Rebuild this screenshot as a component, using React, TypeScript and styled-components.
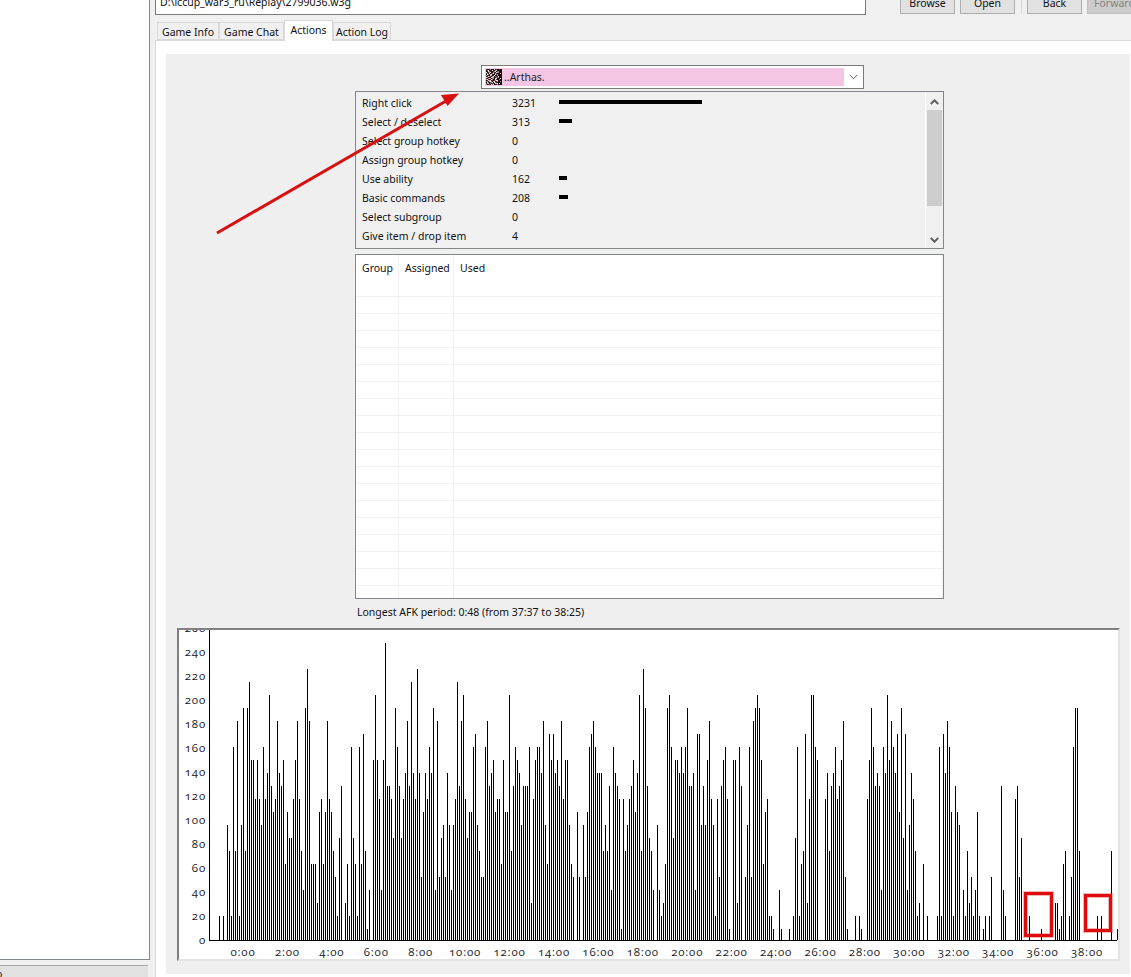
import React from "react";
import styled, { createGlobalStyle } from "styled-components";

const Global = createGlobalStyle`
  html, body { margin: 0; padding: 0; background: #f0f0f0; }
  body { font-family: "Noto Sans", "Open Sans", sans-serif; font-size: 10.5px; color: #111; }
`;

const Root = styled.div`
  position: relative;
  width: 1131px;
  height: 977px;
  overflow: hidden;
  display: flex;
  background: #f0f0f0;
`;
const Sidebar = styled.aside`
  width: 150px;
  margin-right: 5px;
  flex: none;
  display: flex;
  flex-direction: column;
`;
const SideList = styled.div`
  height: 959px;
  background: #fff;
  border-right: 1px solid #828790;
  border-bottom: 1px solid #828790;
`;
const SideStatus = styled.div`
  margin-top: 5px;
  flex: 1;
  width: 148px;
  background: #e1e1e1;
  border-top: 1px solid #a9a9a9;
  overflow: hidden;
  line-height: 17px;
  text-indent: -4px;
`;
const Main = styled.main`
  flex: 1;
  min-width: 0;
  display: flex;
  flex-direction: column;
`;
const Toolbar = styled.div`
  height: 15px;
  display: flex;
  align-items: flex-end;
  overflow: hidden;
  flex: none;
`;
const PathField = styled.div`
  width: 711px;
  height: 24px;
  flex: none;
  box-sizing: border-box;
  border: 1px solid #7a7a7a;
  background: #fff;
  padding-left: 4px;
  line-height: 20px;
  margin-right: 34px;
`;
const ToolButton = styled.button<{ $disabled?: boolean }>`
  width: 55px;
  height: 23px;
  margin: 0 5px 1px 0;
  flex: none;
  box-sizing: border-box;
  padding: 0;
  font: inherit;
  color: ${(p) => (p.$disabled ? "#838383" : "#111")};
  background: ${(p) => (p.$disabled ? "#cccccc" : "#e1e1e1")};
  border: 1px solid ${(p) => (p.$disabled ? "#bfbfbf" : "#adadad")};
`;
const ToolSep = styled.div`
  width: 1px;
  height: 20px;
  background: #d8d8d8;
  margin: 0 5px 1px 1px;
  flex: none;
`;
const Tabs = styled.div`
  margin-top: 5px;
  height: 21px;
  padding-left: 2px;
  display: flex;
  align-items: flex-end;
  margin-bottom: -1px;
  position: relative;
  z-index: 1;
  flex: none;
`;
const Tab = styled.div<{ $active?: boolean; $w: number }>`
  width: ${(p) => p.$w}px;
  height: ${(p) => (p.$active ? 21 : 18)}px;
  margin-bottom: ${(p) => (p.$active ? 0 : 1)}px;
  box-sizing: border-box;
  border: 1px solid #d9d9d9;
  ${(p) => (p.$active ? "border-bottom: none;" : "")}
  background: ${(p) => (p.$active ? "#fff" : "#f0f0f0")};
  text-align: center;
  line-height: 18px;
  white-space: nowrap;
`;
const Pane = styled.section`
  flex: 1;
  background: #fff;
  border-top: 1px solid #d9d9d9;
  border-left: 1px solid #d9d9d9;
  padding: 13px 1px 3px 10px;
  min-height: 0;
  display: flex;
`;
const Panel = styled.div`
  flex: 1;
  background: #efefef;
  display: flex;
  flex-direction: column;
  align-items: flex-start;
  min-width: 0;
`;
const Combo = styled.div`
  margin: 11px 0 0 315px;
  width: 383px;
  height: 24px;
  box-sizing: border-box;
  border: 1px solid #7a7a7a;
  background: #fff;
  padding: 2px 0 2px 3px;
  display: flex;
  align-items: stretch;
  flex: none;
`;
const ComboValue = styled.div`
  width: 359px;
  background: #f5c6e3;
  display: flex;
  align-items: center;
  gap: 2px;
  padding-left: 1px;
  box-sizing: border-box;
  color: #222;
`;
const ComboArrow = styled.div`
  flex: 1;
  display: flex;
  align-items: center;
  justify-content: center;
`;
const Stats = styled.div`
  margin: 2px 0 0 189px;
  width: 589px;
  height: 158px;
  box-sizing: border-box;
  border: 1px solid #82868c;
  background: #f0f0f0;
  display: flex;
  flex: none;
`;
const StatRows = styled.div`
  flex: 1;
  padding-top: 1px;
`;
const StatRow = styled.div`
  height: 19px;
  display: flex;
  align-items: center;
  padding-left: 6px;
`;
const StatLabel = styled.span`
  width: 150px;
  flex: none;
  white-space: nowrap;
`;
const StatValue = styled.span`
  width: 47px;
  flex: none;
`;
const StatBar = styled.i<{ $w: number }>`
  display: block;
  width: ${(p) => p.$w}px;
  height: 4px;
  margin-top: -1px;
  background: #000;
`;
const Scroll = styled.div`
  width: 17px;
  flex: none;
  border-left: 1px solid #fff;
  display: flex;
  flex-direction: column;
  align-items: center;
  padding: 1px 0 0;
`;
const ScrollEnd = styled.div`
  height: 17px;
  width: 100%;
  display: flex;
  align-items: center;
  justify-content: center;
  flex: none;
`;
const Thumb = styled.div`
  width: 15px;
  height: 96px;
  flex: none;
  background: #cdcdcd;
`;
const ScrollTrack = styled.div`
  flex: 1;
`;
const GroupTable = styled.div`
  margin: 5px 0 0 189px;
  width: 589px;
  height: 345px;
  box-sizing: border-box;
  border: 1px solid #82868c;
  background: #fff;
  overflow: hidden;
  flex: none;
`;
const GroupRow = styled.div<{ $head?: boolean }>`
  display: grid;
  grid-template-columns: 43px 55px 1fr;
  height: ${(p) => (p.$head ? 42 : 17)}px;
  box-sizing: border-box;
  border-bottom: 1px solid #f0f0f0;
`;
const GroupCell = styled.div`
  border-right: 1px solid #f0f0f0;
  padding: 6px 0 0 6px;
  line-height: 15px;
  white-space: nowrap;
`;
const Afk = styled.div`
  margin: 5px 0 0 191px;
  height: 16px;
  line-height: 16px;
  flex: none;
  white-space: nowrap;
`;
const ChartFrame = styled.div`
  margin: 8px 0 0 11px;
  width: 943px;
  height: 333px;
  box-sizing: border-box;
  background: #fff;
  border-style: solid;
  border-width: 2px;
  border-color: #808080 #e3e3e3 #e3e3e3 #808080;
  flex: none;
  overflow: hidden;
`;
const ChartSvg = styled.svg`
  display: block;
  text {
    font-family: "Open Sans", "Lato", "DejaVu Serif", serif;
    font-size: 11.5px;
    font-variant-numeric: oldstyle-nums;
    letter-spacing: 0.8px;
    fill: #1a1a2a;
  }
`;
const Overlay = styled.svg`
  position: absolute;
  left: 0;
  top: 0;
  pointer-events: none;
`;

// One character per 2px column, base 36: bar height is 13n - 2 pixels.
const LEVELS = [
  // x = 219 .. 489
  "20209 72f7h 29i7i keebe b9fbd jcabh dce6a 88beh b74il h6663 ab6ah ba752 8c036 2f862 f6g71 40ejeb 4encc b8ifc 8bdhc kdbld 5adbf di4h5 89 5d949 bkchj b8aaf g9755 fhc",
  // x = 491 .. 853
  "deabb 6eaaj 7cfed 9cccf 3beff dh96g egdec hbee9 650a5 0 95afg hfddd 797c4 fdcb1 b79bc eadj7 lic87" +
    "40942 36ijf 8eedf dficc d4gg9 c9ehb 92b5c efb10 ee3fc 059f5 hijie 6ab22 10041 00010 28f26 7g3bj jfe00 0bd7c dfbce h5100 0",
  // x = 855 .. 1117
  "20210 0beif cdc4f djehf dgai8 g49db 72306 02000 02f2g dhfa2 ca904 27352 4a201 20250 000c4 20000 bc580 00200 00010 00000 33126 7025f ii700 00000 02020 00070 01",
]
  .join("")
  .replace(/ /g, "");

const BAR_X0 = 219;
const barsPath = LEVELS.split("")
  .map((c, i) => {
    const n = parseInt(c, 36);
    if (!n) return "";
    const x = BAR_X0 + i * 2;
    const h = 13 * n - 2;
    return `M${x} ${940 - h}h1v${h}h-1z`;
  })
  .join("");

const STATS = [
  { label: "Right click", value: 3231, w: 143 },
  { label: "Select / deselect", value: 313, w: 13 },
  { label: "Select group hotkey", value: 0, w: 0 },
  { label: "Assign group hotkey", value: 0, w: 0 },
  { label: "Use ability", value: 162, w: 8 },
  { label: "Basic commands", value: 208, w: 9 },
  { label: "Select subgroup", value: 0, w: 0 },
  { label: "Give item / drop item", value: 4, w: 0 },
];

const ICON_ROWS = [
  "1001200030100100",
  "0230013002300000",
  "0032100123012000",
  "3012300210322000",
  "1203012302100030",
  "0320230003120000",
  "2100320130020000",
  "0132102302103000",
  "3200033200212000",
  "1023201203300030",
  "2310132003100200",
  "0132301012330000",
  "1203320230120020",
  "0310123032100000",
  "1230201103230300",
  "2011032300120000",
];
const ICON_COLORS = ["#171011", "#5a3a40", "#b08a93", "#ecdde0"];

const PlayerIcon = () => (
  <svg width="16" height="16" viewBox="0 0 16 16" shapeRendering="crispEdges" style={{ flex: "none" }}>
    {ICON_ROWS.map((row, y) =>
      row.split("").map((c, x) => <rect key={`${x}-${y}`} x={x} y={y} width="1" height="1" fill={ICON_COLORS[+c]} />)
    )}
  </svg>
);

const Chevron = ({ up, color = "#606060", w = 2 }: { up?: boolean; color?: string; w?: number }) => (
  <svg width="9" height="6" viewBox="0 0 9 6">
    <path d={up ? "M0.8 5L4.5 1.3L8.2 5" : "M0.8 1L4.5 4.7L8.2 1"} fill="none" stroke={color} strokeWidth={w} />
  </svg>
);

const xLabels = Array.from({ length: 20 }, (_, i) => ({ t: `${i * 2}:00`, x: 243 + i * 44.42 }));
const yLabels = Array.from({ length: 14 }, (_, i) => i * 20);

const Mark = ({ x, y, w, h }: { x: number; y: number; w: number; h: number }) => (
  <>
    <rect x={x} y={y} width={w} height={h} fill="none" stroke="#dd0b0b" strokeOpacity="0.3" strokeWidth="5" />
    <rect x={x} y={y} width={w} height={h} fill="none" stroke="#dd0b0b" strokeWidth="3" />
  </>
);

export default function App() {
  return (
    <Root>
      <Global />
      <Sidebar>
        <SideList />
        <SideStatus>o</SideStatus>
      </Sidebar>
      <Main>
        <Toolbar>
          <PathField>D:\iccup_war3_ru\Replay\2799036.w3g</PathField>
          <ToolButton>Browse</ToolButton>
          <ToolButton>Open</ToolButton>
          <ToolSep />
          <ToolButton>Back</ToolButton>
          <ToolButton $disabled>Forward</ToolButton>
        </Toolbar>
        <Tabs>
          <Tab $w={62}>Game Info</Tab>
          <Tab $w={65}>Game Chat</Tab>
          <Tab $w={49} $active>Actions</Tab>
          <Tab $w={58}>Action Log</Tab>
        </Tabs>
        <Pane>
          <Panel>
            <Combo>
              <ComboValue>
                <PlayerIcon />
                ..Arthas.
              </ComboValue>
              <ComboArrow>
                <Chevron color="#5a5a5a" w={1} />
              </ComboArrow>
            </Combo>
            <Stats>
              <StatRows>
                {STATS.map((s) => (
                  <StatRow key={s.label}>
                    <StatLabel>{s.label}</StatLabel>
                    <StatValue>{s.value}</StatValue>
                    {s.w > 0 && <StatBar $w={s.w} />}
                  </StatRow>
                ))}
              </StatRows>
              <Scroll>
                <ScrollEnd>
                  <Chevron up />
                </ScrollEnd>
                <Thumb />
                <ScrollTrack />
                <ScrollEnd>
                  <Chevron />
                </ScrollEnd>
              </Scroll>
            </Stats>
            <GroupTable>
              <GroupRow $head>
                <GroupCell>Group</GroupCell>
                <GroupCell>Assigned</GroupCell>
                <GroupCell>Used</GroupCell>
              </GroupRow>
              {Array.from({ length: 18 }, (_, i) => (
                <GroupRow key={i}>
                  <GroupCell />
                  <GroupCell />
                  <GroupCell />
                </GroupRow>
              ))}
            </GroupTable>
            <Afk>Longest AFK period: 0:48 (from 37:37 to 38:25)</Afk>
            <ChartFrame>
              <ChartSvg width="939" height="329" viewBox="179 630 939 329" shapeRendering="crispEdges">
                <path d="M209 630h1v310h-1zM209 940h908v1h-908z" fill="#000" />
                <path d={barsPath} fill="#000" />
                <Mark x={1025.5} y={893.5} w={26} h={42} />
                <Mark x={1085.5} y={895.5} w={25} h={35} />
                {yLabels.map((v) => (
                  <text key={v} x="206" y={944 - v * 1.2} textAnchor="end" shapeRendering="auto">
                    {v}
                  </text>
                ))}
                {xLabels.map((l) => (
                  <text key={l.t} x={l.x} y="956" textAnchor="middle" shapeRendering="auto">
                    {l.t}
                  </text>
                ))}
              </ChartSvg>
            </ChartFrame>
          </Panel>
        </Pane>
      </Main>
      <Overlay width="1131" height="977" viewBox="0 0 1131 977">
        <path d="M217 233L446 101" stroke="#d91010" strokeWidth="3" fill="none" />
        <path d="M459 93.5L441 95L447.5 106z" fill="#d91010" />
      </Overlay>
    </Root>
  );
}
